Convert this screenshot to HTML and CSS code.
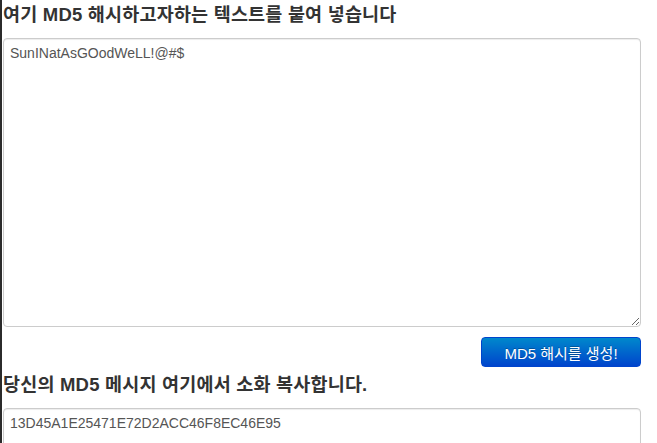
FILE: index.html
```html
<!DOCTYPE html>
<html>
<head>
    <title>MD5 해시 생성기</title>
    <meta charset="utf-8">
    <link rel="stylesheet" href="styles.css">
</head>
<body>
    <div class="page">
        <label class="title" for="source">여기 MD5 해시하고자하는 텍스트를 붙여 넣습니다</label>
        <textarea id="source" class="box big">SunINatAsGOodWeLL!@#$</textarea>

        <div class="actions">
            <button class="btn-primary">MD5 해시를 생성!</button>
        </div>

        <label class="title" for="result">당신의 MD5 메시지 여기에서 소화 복사합니다.</label>
        <textarea id="result" class="box small" readonly>13D45A1E25471E72D2ACC46F8EC46E95</textarea>
    </div>
</body>
</html>
```

FILE: styles.css
```css
html, body {
    margin: 0;
    padding: 0;
    height: 100%;
    overflow: hidden;
}
body {
    font-family: Arial, "Liberation Sans", "Noto Sans CJK KR", sans-serif;
    color: #333;
    background: #fff;
    border-left: 2px solid #2b2b2b;
    box-sizing: border-box;
}
.page {
    padding: 5px 16px 0 1px;
}
.title {
    display: block;
    font-size: 18.5px;
    font-weight: bold;
    letter-spacing: 0.2px;
    line-height: 20px;
    color: #333;
    margin-bottom: 13px;
}
.box {
    display: block;
    width: 100%;
    box-sizing: border-box;
    border: 1px solid #ccc;
    border-radius: 4px;
    padding: 4px 6px;
    font-family: Arial, "Liberation Sans", sans-serif;
    font-size: 14px;
    line-height: 20px;
    color: #555;
    background: #fff;
    box-shadow: inset 0 1px 1px rgba(0, 0, 0, 0.075);
}
.big {
    height: 289px;
}
.small {
    height: 60px;
    resize: none;
}
.actions {
    display: flex;
    justify-content: flex-end;
    margin: 10px 0 8px;
}
.btn-primary {
    width: 160px;
    height: 30px;
    padding: 0;
    font-family: Arial, "Liberation Sans", "Noto Sans CJK KR", sans-serif;
    font-size: 15px;
    color: #fff;
    border: 1px solid #0044cc;
    border-radius: 4px;
    background: linear-gradient(to bottom, #0088cc, #0044cc);
    text-shadow: 0 -1px 0 rgba(0, 0, 0, 0.25);
    cursor: pointer;
}
```
